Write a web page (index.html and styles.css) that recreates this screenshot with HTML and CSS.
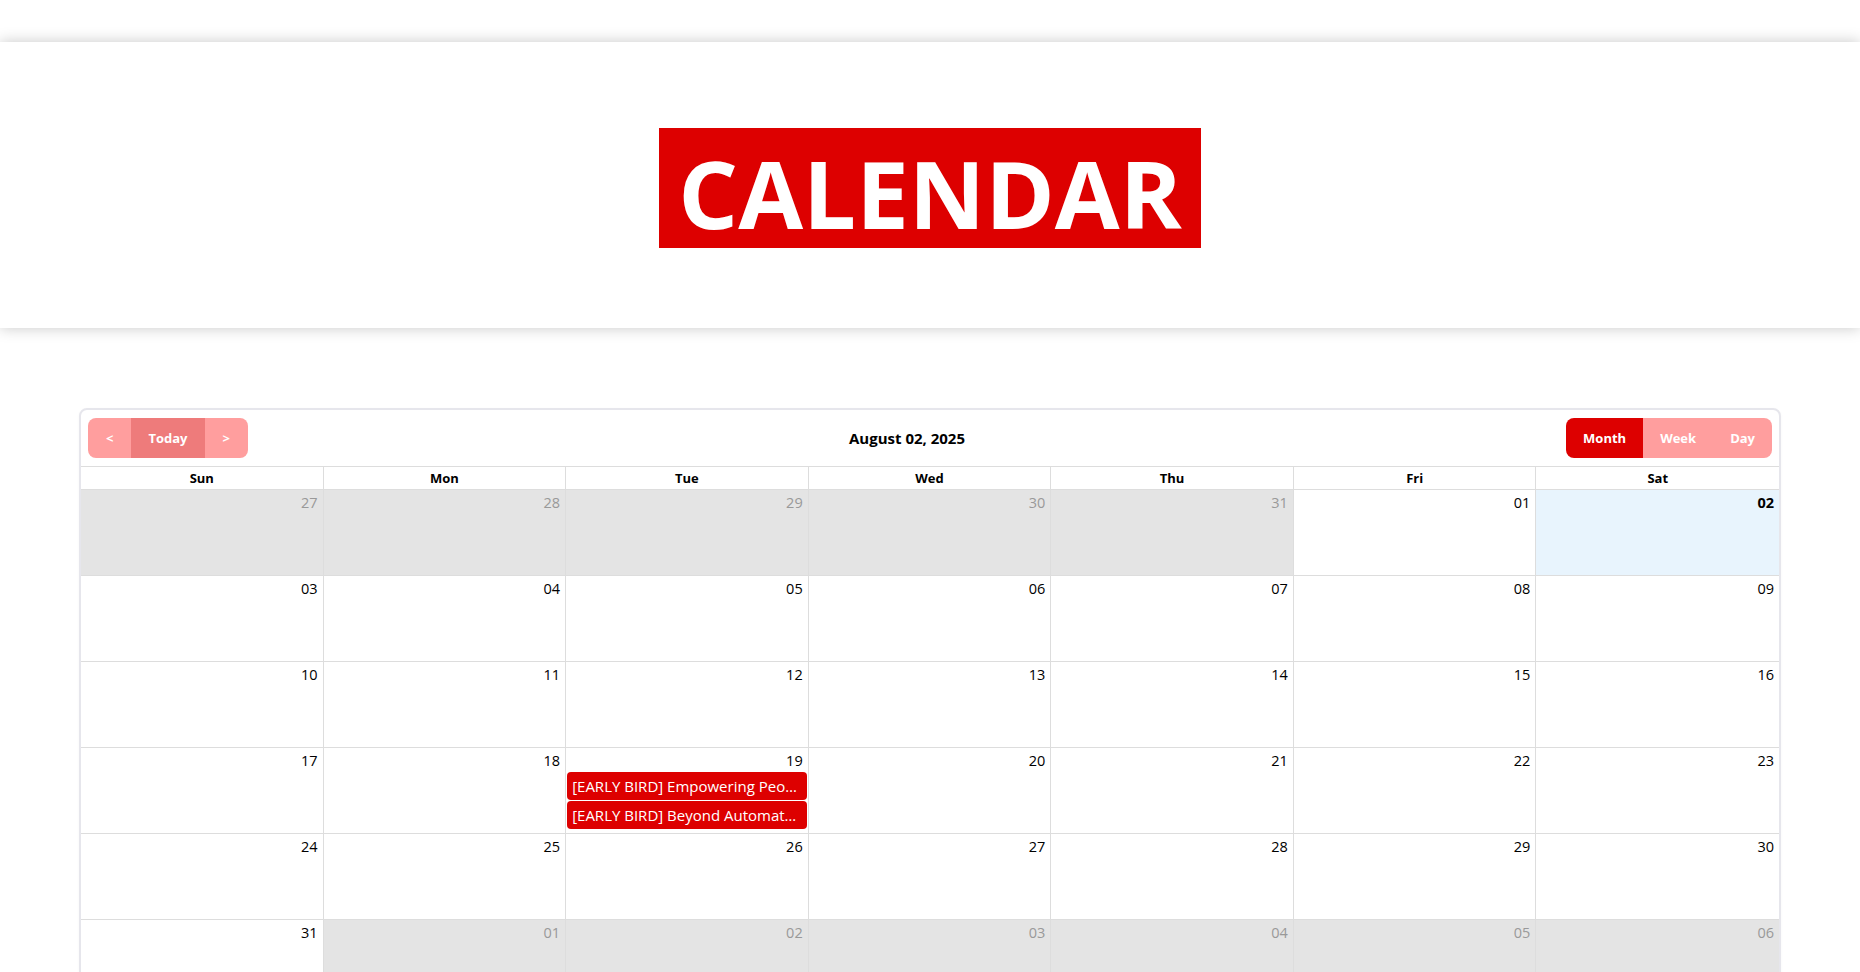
FILE: index.html
```html
<!DOCTYPE html>
<html lang="en">
<head>
<meta charset="utf-8">
<title>Calendar</title>
<link rel="stylesheet" href="styles.css">
</head>
<body>
<div class="topgap"></div>
<header class="site-header">
  <div class="logo">CALENDAR</div>
</header>
<main class="main">
  <section class="calendar">
    <div class="toolbar">
      <div class="btn-group">
        <button class="btn btn-arrow">&lt;</button>
        <button class="btn btn-today">Today</button>
        <button class="btn btn-arrow">&gt;</button>
      </div>
      <div class="title">August 02, 2025</div>
      <div class="btn-group">
        <button class="btn btn-active">Month</button>
        <button class="btn">Week</button>
        <button class="btn">Day</button>
      </div>
    </div>
    <div class="grid">
      <div class="dow">Sun</div><div class="dow">Mon</div><div class="dow">Tue</div><div class="dow">Wed</div><div class="dow">Thu</div><div class="dow">Fri</div><div class="dow">Sat</div>

      <div class="cell off"><span class="num">27</span></div>
      <div class="cell off"><span class="num">28</span></div>
      <div class="cell off"><span class="num">29</span></div>
      <div class="cell off"><span class="num">30</span></div>
      <div class="cell off"><span class="num">31</span></div>
      <div class="cell"><span class="num">01</span></div>
      <div class="cell today"><span class="num">02</span></div>

      <div class="cell"><span class="num">03</span></div>
      <div class="cell"><span class="num">04</span></div>
      <div class="cell"><span class="num">05</span></div>
      <div class="cell"><span class="num">06</span></div>
      <div class="cell"><span class="num">07</span></div>
      <div class="cell"><span class="num">08</span></div>
      <div class="cell"><span class="num">09</span></div>

      <div class="cell"><span class="num">10</span></div>
      <div class="cell"><span class="num">11</span></div>
      <div class="cell"><span class="num">12</span></div>
      <div class="cell"><span class="num">13</span></div>
      <div class="cell"><span class="num">14</span></div>
      <div class="cell"><span class="num">15</span></div>
      <div class="cell"><span class="num">16</span></div>

      <div class="cell"><span class="num">17</span></div>
      <div class="cell"><span class="num">18</span></div>
      <div class="cell"><span class="num">19</span>
        <div class="event">[EARLY BIRD] Empowering Peo…</div>
        <div class="event">[EARLY BIRD] Beyond Automat…</div>
      </div>
      <div class="cell"><span class="num">20</span></div>
      <div class="cell"><span class="num">21</span></div>
      <div class="cell"><span class="num">22</span></div>
      <div class="cell"><span class="num">23</span></div>

      <div class="cell"><span class="num">24</span></div>
      <div class="cell"><span class="num">25</span></div>
      <div class="cell"><span class="num">26</span></div>
      <div class="cell"><span class="num">27</span></div>
      <div class="cell"><span class="num">28</span></div>
      <div class="cell"><span class="num">29</span></div>
      <div class="cell"><span class="num">30</span></div>

      <div class="cell"><span class="num">31</span></div>
      <div class="cell off"><span class="num">01</span></div>
      <div class="cell off"><span class="num">02</span></div>
      <div class="cell off"><span class="num">03</span></div>
      <div class="cell off"><span class="num">04</span></div>
      <div class="cell off"><span class="num">05</span></div>
      <div class="cell off"><span class="num">06</span></div>
    </div>
  </section>
</main>
</body>
</html>
```

FILE: styles.css
```css
* { box-sizing: border-box; }

html, body {
  margin: 0;
  padding: 0;
  background: #fff;
  font-family: "Open Sans", "Noto Sans", "Liberation Sans", sans-serif;
  color: #000;
}

.topgap {
  height: 42px;
}

.site-header {
  height: 286px;
  background: #fff;
  box-shadow: 0 0 14px rgba(0, 0, 0, 0.22);
  display: flex;
  align-items: flex-start;
  justify-content: center;
  padding-top: 86px;
  position: relative;
}

.logo {
  background: #dd0000;
  color: #fff;
  font-weight: 700;
  font-size: 94px;
  line-height: 110px;
  height: 120px;
  padding-top: 10px;
  width: 542px;
  text-align: center;
}

.main {
  padding: 80px 79px 40px;
}

.calendar {
  border: 2px solid #e6e6ec;
  border-radius: 8px;
  background: #fff;
  overflow: hidden;
  box-shadow: 0 1px 3px rgba(0, 0, 0, 0.04);
}

.toolbar {
  display: flex;
  align-items: center;
  justify-content: space-between;
  padding: 8px 7px 8px 7px;
}

.btn-group {
  display: flex;
  border-radius: 8px;
  overflow: hidden;
  height: 40px;
}

.btn {
  border: 0;
  margin: 0;
  height: 40px;
  padding: 0 17px;
  background: #ff9e9e;
  color: #fff;
  font-family: inherit;
  font-weight: 700;
  font-size: 13px;
}

.btn-arrow {
  padding: 0 18px;
}

.btn-today {
  background: #ee7b7b;
  padding: 0 17px;
}

.btn-active {
  background: #dd0000;
}

.title {
  font-weight: 700;
  font-size: 15px;
}

.grid {
  display: grid;
  grid-template-columns: repeat(7, 1fr);
  grid-auto-rows: 86px;
  grid-template-rows: 23px;
  border-top: 1px solid #ddd;
}

.dow {
  font-weight: 700;
  font-size: 13px;
  text-align: center;
  line-height: 22px;
  border-right: 1px solid #ddd;
  border-bottom: 1px solid #ddd;
}

.cell {
  border-right: 1px solid #ddd;
  border-bottom: 1px solid #ddd;
  display: flex;
  flex-direction: column;
  min-width: 0;
}

.dow:nth-child(7n), .cell:nth-child(7n) {
  border-right: 0;
}

.num {
  display: block;
  text-align: right;
  font-size: 14.5px;
  line-height: 20px;
  padding: 3px 5px 1px 0;
  height: 24px;
}

.off {
  background: #e4e4e4;
}

.off .num {
  color: #999;
}

.today {
  background: #e8f4fd;
}

.today .num {
  font-weight: 700;
}

.event {
  margin: 0 1px 1px 1px;
  background: #dd0000;
  color: #fff;
  border-radius: 4px;
  height: 28px;
  line-height: 28px;
  padding: 0 5px;
  font-size: 15px;
  white-space: nowrap;
  overflow: hidden;
}
```
